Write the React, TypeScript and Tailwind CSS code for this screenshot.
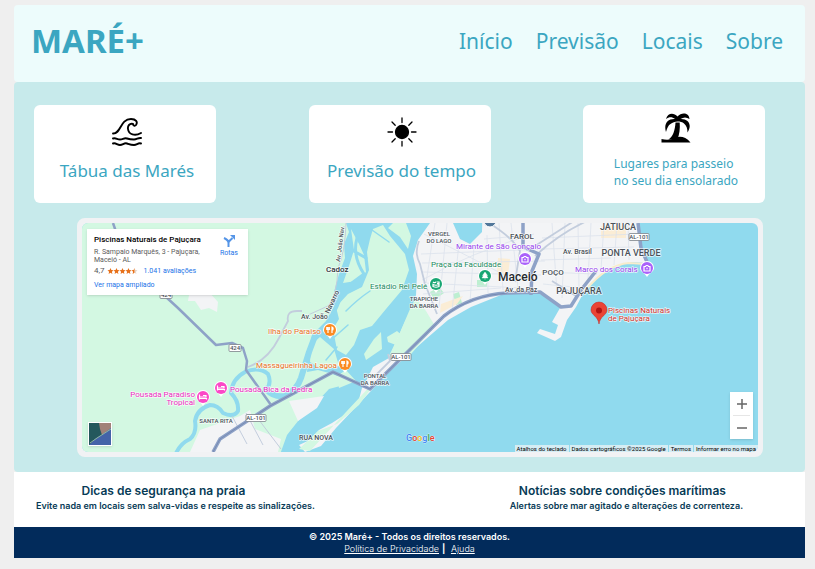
import React from 'react';

const navItems = ['Início', 'Previsão', 'Locais', 'Sobre'];

function WaveIcon() {
  return (
    <svg viewBox="0 0 30 30" className="h-[30px] w-[30px]" fill="none" stroke="#000" strokeWidth="1.9" strokeLinecap="round" strokeLinejoin="round" aria-hidden="true">
      <path d="M1 16.500C9 17 8 2 19 2c5 0 7 3 5 6-1.200 1.400-3 .6-3-1-3.500-1-5.500 2-5 5 .6 5.500 7 7.500 13 4" />
      <path d="M1 21.500c3-1 4 1 7 1s4-2 7-1 4 1 7 1 4-2 7-1.500" />
      <path d="M1 26.500c3-1 4 1.500 7 1.500s4-2.500 7-1.500 4 1.500 7 1.500 4-2.500 7-1.500" />
    </svg>
  );
}

function SunIcon() {
  return (
    <svg viewBox="0 0 30 30" className="h-[30px] w-[30px]" stroke="#000" strokeWidth="1.300" strokeLinecap="round" aria-hidden="true">
      <circle cx="15" cy="15" r="6.500" />
      <path d="M15 1v4.500M15 24.500V29M1 15h4.500M24.500 15H29M5 5l3.200 3.200M21.800 21.800 25 25M5 25l3.200-3.200M21.800 8.200 25 5" />
    </svg>
  );
}

function PalmIcon() {
  return (
    <svg viewBox="0 0 30 30" className="h-[30px] w-[30px]" aria-hidden="true">
      <path d="M16.500 3.500C12.500-1 6.500 0 5 6c3-2.500 6-2.500 9 0C6.500 5.500 2.500 11 5 19c1-4 2.500-7 4.500-8 2-1.500 4.500-2.500 7-2.500s5 .5 6.500 2c2.500 2 3.500 5 3.500 9C31.500 12 27.500 5.500 19.500 6c3-2 6-2 9 0C28-.5 20.500-1 16.500 3.500z" />
      <path d="M14.500 9.500h4.200c.5 6-.3 12-2.200 17H7.500c4.500-3 6.500-9 7-17z" />
      <path d="M.5 26c4 1 7 1 11 0 5-3 12-4 18 3.500H.5z" />
    </svg>
  );
}

function FeatureCard({ icon, children, small }: { icon: React.ReactNode; children: React.ReactNode; small?: boolean }) {
  return (
    <button type="button" className="flex h-[98px] w-[182px] flex-col items-center rounded-md bg-white pl-1 text-[#3ba6c1]">
      <span className={small ? 'mt-2' : 'mt-3'}>{icon}</span>
      <span className={small ? 'mt-3 text-left text-xs leading-[17px]' : 'mt-3 text-[17px] leading-6'}>{children}</span>
    </button>
  );
}

type LabelProps = { x: number; y: number; color?: string; size?: number; weight?: number; anchor?: 'start' | 'middle' | 'end'; rotate?: number; children: string };

function Label({ x, y, color, size = 8, weight, anchor = 'start', rotate = 0, children }: LabelProps) {
  return (
    <text x={x} y={y} fill={color ?? '#4b5259'} fontSize={size} fontWeight={weight ?? (color ? 400 : 500)} textAnchor={anchor} stroke="#fff" strokeWidth="1.5" strokeOpacity="0.75" strokeLinejoin="round" paintOrder="stroke" transform={rotate ? `rotate(${rotate} ${x} ${y})` : undefined}>
      {children}
    </text>
  );
}

function Pin({ x, y, color, kind }: { x: number; y: number; color: string; kind: 'food' | 'bed' | 'tree' | 'camera' | 'stadium' }) {
  return (
    <g transform={`translate(${x} ${y})`}>
      <path d="M-7 0a7 7 0 1 1 14 0c0 4-5 5-7 9-2-4-7-5-7-9z" fill="#fff" />
      <circle r="6" fill={color} />
      <g fill="none" stroke="#fff" strokeWidth="1.200">
        {kind === 'food' && <path d="M-2-3v6M-3.200-3v2.500h2.500V-3M2 3v-6c1.500.5 1.500 3 0 3.500" />}
        {kind === 'bed' && <path d="M-3.500-2.500v5M-3.500 1.500h7v1M-3 0h6V-1.500H0" />}
        {kind === 'tree' && <path d="M0-4-2.500-.5h1L-3 2h6L1.500-.5h1zM0 2v2" fill="#fff" strokeWidth="0.400" />}
        {kind === 'camera' && <path d="M-3-1.500h1.500l.7-1h1.600l.7 1H3V3h-6zM0-.3v1.600" />}
        {kind === 'stadium' && <path d="M-3-2c1 1 3 1 3-.5M1-2h2v1.500H1M-3 .5c2 1 4 1 6 0v2c-2 1-4 1-6 0z" />}
      </g>
    </g>
  );
}

function Shield({ x, y, w, children }: { x: number; y: number; w: number; children: string }) {
  return (
    <g>
      <rect x={x - w / 2} y={y - 3.5} width={w} height="7" rx="1" fill="#fff" stroke="#7b8289" strokeWidth="0.8" />
      <text x={x} y={y + 2.2} fontSize="6" fontWeight="500" textAnchor="middle" fill="#4b5259">{children}</text>
    </g>
  );
}

function MapDrawing() {
  return (
    <svg viewBox="82 223 676 229" preserveAspectRatio="xMidYMid slice" className="block h-[229px] w-full" fontFamily="Roboto, sans-serif" role="img" aria-label="Mapa de Maceió e Piscinas Naturais de Pajuçara">
      <rect x="0" y="150" width="900" height="400" fill="#90daee" />
      {/* land west of the lagoon */}
      <path d="M0 150H346V223L349 232 344 244 345 258 339 274 334 292 334 306 326 321 312 335 309 350 307 372 318 370 329 373 341 377 344 385 329 389 315 404 302 416 287 435 278 460H0z" fill="#d3f8e2" />
      <path d="M190 452 200 430 240 416 250 410 255 429 281 439 278 452zM289 401 324 396 317 408 298 421z" fill="#f3f4f6" />
      {/* lagoon islands */}
      <path d="M351 229 359 244 364 255 366 272 356 281 343 283 349 266 354 250zM373 229 383 225 390 236 405 254 409 270 402 290 386 309 372 326 360 330 354 345 346 355 337 350 333 329 339 319 336 307 348 294 362 287 369 270 367 252 370 239zM393 223h13l5 13-3 13-8-12-12-9zM311 345l9-8 14 12 5 17-16 4-13-8zM337 376l9-6 10 11-17 7zM364 354l10-15 7-7 1 17-16 11zM387 337l10-6 7 6-8 8-8-3z" fill="#d3f8e2" />
      {/* winding river and its branches */}
      <g fill="none" stroke="#90daee" strokeLinecap="round" strokeLinejoin="round">
        <path d="M357 238q-5 18 7 36-12 8-22 18-4 16-12 27M366 258l-14-8" strokeWidth="3" />
        <path d="M370 291q-12 8-24 20M389 242l-17-12M348 325l-17 15M337 347l-11 13" strokeWidth="1.500" />
        <path d="M175 456q4-12 15-17 7-6 5-18 2-12 15-16 8 0 13 8 11 5 15-2 1-10-7-18 1-14 14-21 14-6 23 2 4 9-2 17" strokeWidth="4" />
        <path d="M266 389q8 9 19 7 12-6 16-18l8-26 6-16" strokeWidth="6" />
      </g>
      {/* coast, city and harbour */}
      <path d="M432 150 430 223 418 240 413 256 417 274 416 295 412 308 404 324 397 340 389 358 373 367 366 381 362 388 358 403 349 412 332 423 319 430 310 440 299 445 305 452 321 446 336 428 369 393 390 371 426 339 448 320 471 307 506 293 532 290 550 299 560 308 552 322 558 325 555 334 540 329 537 333 555 341 561 337 567 320 576 307 586 288 606 270 630 262 648 263 639 246 637 150z" fill="#f3f4f6" />
      <path d="M416 298 410 309 398 337 389 356 406 360 435 326 426 311zM370 390l-11 15-22 19-19 7-19 18 11 2 36-39 29-31z" fill="#d3f8e2" />
      <path d="M453 150V223L460 239 470 244 482 232 484 150z" fill="#90daee" />
      <path d="m430 292 9-5 5 6-10 7zM453 294l6-2 3 11-6 2zM477 280h10v7h-10z" fill="#bdefd1" />
      <path d="m498 258 12 1-2 16-11-3zM441 304l22-8-6 8-17 9zM601 226h25v12h-25z" fill="#fbedd5" />
      {/* local streets */}
      <g fill="none" stroke="#dce2ec" strokeWidth="0.8">
        <path d="M484 239l48-4M421 254l124-5M422 263l123-2M422 272l119 3M423 283l99 5M423 294l78-6M435 223l-10 67M447 223l-8 84M459 243l-7 68M474 246l-4 56M487 235l1 58M499 223l4 67M511 223l7 65M424 234q40 20 94 48M422 280q50-28 112-46M542 238l94-4M541 249l93-2M541 260l70-2M541 272l56 2M543 284l40 4M552 223l5 69M565 223l-3 75M578 223l1 66M591 223l-3 56M604 223l-3 47M617 223l-3 42M628 223l1 37" />
      </g>
      <g fill="none" stroke="#c3cddd" strokeWidth="1.800">
        <path d="M419 241q-5 12 1 23l5 20 12 30M489 223q24 15 31 28l-5 31M535 256q25-23 54-36M535 246l39-25M552 281l24 15M375 376l15-15-2-7M248 367q20-7 31-29l9-17q-2-10 9-10h5" />
        <path d="M346 223q-1 30-8 45-1 28-10 38l-20 9M232 416l15 28M246 413l17 32M259 420l22 29" strokeWidth="1" />
      </g>
      <path d="M586 290q20-25 43-27l17 1" fill="none" stroke="#f8eccb" strokeWidth="2" />
      {/* highways */}
      <g fill="none" stroke="#8ea2c7" strokeLinejoin="round">
        <path d="m113 223 9 26 44 48 12 11 38 37 16-2 11 5 4 13-1 9 25 35" strokeWidth="2.500" />
        <path d="m213 452 7-13 50-33 63-34 37 17 74-73q27-21 63-23l33-1 21 15 10-1 10-16 15-19M638 223l3 25 6 14M523 223v24l16 7-7 17-1 24" strokeWidth="3.500" />
      </g>
      <path d="m213 452 7-13 50-33 63-34 37 17 74-73q27-21 63-23" fill="none" stroke="#7185ae" strokeWidth="0.800" />
      <path d="m189 295 20-3 9 10-1 10-8-4-8 2-6-9-7 0z" fill="#f3f4f6" />
      <path d="M484 221a6 6 0 0 0 12 0" fill="#52779a" stroke="#fff" />

      <Shield x={235} y={348} w={12}>424</Shield>
      <Shield x={166} y={295} w={12}>424</Shield>
      <Shield x={256} y={418} w={20}>AL-101</Shield>
      <Shield x={401} y={357} w={20}>AL-101</Shield>
      <Shield x={639} y={237} w={20}>AL-101</Shield>

      <Label x={326} y={272} color="#30363b" weight={500}>Cadoz</Label>
      <Label x={340} y={262} size={6} rotate={-83}>Av. João Nav.</Label>
      <Label x={301} y={319} size={7}>Av. João</Label>
      <Label x={329} y={314} size={7} rotate={-65}>Navarro</Label>
      <Label x={439} y={236} size={6} anchor="middle">VERGEL</Label>
      <Label x={439} y={243} size={6} anchor="middle">DO LAGO</Label>
      <Label x={424} y={301} size={6} anchor="middle">TRAPICHE</Label>
      <Label x={424} y={308} size={6} anchor="middle">DA BARRA</Label>
      <Label x={375} y={378} size={6} anchor="middle">PONTAL</Label>
      <Label x={375} y={385} size={6} anchor="middle">DA BARRA</Label>
      <Label x={216} y={423} size={6} anchor="middle">SANTA RITA</Label>
      <Label x={316} y={440} size={7} anchor="middle">RUA NOVA</Label>
      <Label x={522} y={239} anchor="middle">FAROL</Label>
      <Label x={618} y={230} size={9} anchor="middle">JATIUCA</Label>
      <Label x={631} y={256} size={9} anchor="middle">PONTA VERDE</Label>
      <Label x={553} y={275} anchor="middle">POÇO</Label>
      <Label x={579} y={294} size={9} anchor="middle">PAJUÇARA</Label>
      <Label x={563} y={254} size={7}>Av. Brasil</Label>
      <Label x={505} y={292} size={7}>Av. da Paz</Label>
      <Label x={498} y={281} size={12} color="#252a2e" weight={500}>Maceió</Label>
      <Label x={431} y={267} color="#1b8b61">Praça da Faculdade</Label>
      <Label x={370} y={289} color="#1b8b61">Estádio Rei Pelé</Label>
      <Label x={456} y={249} color="#9742ed">Mirante de São Gonçalo</Label>
      <Label x={575} y={272} color="#9742ed">Marco dos Corais</Label>
      <Label x={268} y={334} color="#e9711f">Ilha do Paraiso</Label>
      <Label x={256} y={368} color="#e9711f">Massagueirinha Lagoa</Label>
      <Label x={230} y={392} color="#eb2cbe">Pousada Bica da Pedra</Label>
      <Label x={195} y={397} color="#eb2cbe" anchor="end">Pousada Paradiso</Label>
      <Label x={195} y={405} color="#eb2cbe" anchor="end">Tropical</Label>
      <Label x={608} y={313} color="#d4342d">Piscinas Naturais</Label>
      <Label x={608} y={321} color="#d4342d">de Pajuçara</Label>

      <Pin x={330} y={330} color="#fb8b22" kind="food" />
      <Pin x={345} y={364} color="#fb8b22" kind="food" />
      <Pin x={221} y={388} color="#fb48c7" kind="bed" />
      <Pin x={203} y={397} color="#fb48c7" kind="bed" />
      <Pin x={436} y={284} color="#18a673" kind="stadium" />
      <Pin x={485} y={276} color="#18a673" kind="tree" />
      <Pin x={525} y={259} color="#aa61fa" kind="camera" />
      <Pin x={647} y={268} color="#aa61fa" kind="camera" />
      <path d="M599 324c-1-8-8-9-8-14a8 8 0 1 1 16 0c0 5-7 6-8 14z" fill="#ea4335" stroke="#c5221f" strokeWidth="0.5" />
      <circle cx="599" cy="310.500" r="3" fill="#b31412" />
      <text x="406" y="441" fontSize="9" fontWeight="500" stroke="#fff" strokeWidth="0.500" paintOrder="stroke">
        <tspan fill="#4285f4">G</tspan><tspan fill="#ea4335">o</tspan><tspan fill="#fbbc05">o</tspan><tspan fill="#4285f4">g</tspan><tspan fill="#34a853">l</tspan><tspan fill="#ea4335">e</tspan>
      </text>
    </svg>
  );
}

function PlaceCard() {
  return (
    <article className="absolute left-[5px] top-1.5 flex h-[66px] w-[161px] justify-between bg-white py-1.5 pl-[7px] pr-2.5 shadow-sm">
      <div>
        <h2 className="whitespace-nowrap text-[8px] font-medium leading-[9px] text-black">Piscinas Naturais de Pajuçara</h2>
        <p className="mt-1 whitespace-nowrap text-[7px] leading-2 text-[#5b5b5b]">R. Sampaio Marquês, 3 - Pajuçara,<br />Maceió - AL</p>
        <p className="mt-px flex items-center whitespace-nowrap text-[8px] leading-3 text-[#5b5b5b]">
          4,7
          <svg viewBox="0 0 50 10" className="ml-0.5 h-[6px] w-[31px]" aria-hidden="true">
            {[0, 10, 20, 30].map((x) => (
              <path key={x} transform={`translate(${x} 0)`} d="m5 0 1.500 3.500 3.500.3-2.700 2.500.9 3.700L5 8 1.800 10l.9-3.700L0 3.800l3.500-.3z" fill="#e7711b" />
            ))}
            <path transform="translate(40 0)" d="m5 0 1.500 3.500 3.500.3-2.700 2.500.9 3.700L5 8z" fill="#e6d5c8" />
            <path transform="translate(40 0)" d="M5 0v8l-3.200 2 .9-3.700L0 3.800l3.500-.3z" fill="#e7711b" />
          </svg>
          <a href="#avaliacoes" className="ml-1.5 text-[7px] text-[#1a73e8]">1.041 avaliações</a>
        </p>
        <a href="#mapa" className="mt-1 block text-[7px] leading-2 text-[#1a73e8]">Ver mapa ampliado</a>
      </div>
      <a href="#rotas" className="flex flex-col items-center text-[7px] leading-2 text-[#1a73e8]">
        <svg viewBox="0 0 12 12" className="mb-0.5 h-3 w-3" fill="none" stroke="#5595e7" strokeWidth="2" aria-hidden="true">
          <path d="M5.500 12V8q0-2 2-3l2-2M5.500 8Q5.500 5 1 3" />
          <path d="M7 0h5v5z" fill="#5595e7" stroke="none" />
        </svg>
        Rotas
      </a>
    </article>
  );
}

function MapPanel() {
  return (
    <section className="ml-[63px] mr-[42px] mt-[15px] rounded-lg border-[5px] border-[#f1f2f4] bg-[#f1f2f4] font-['Roboto',sans-serif]">
      <div className="relative overflow-hidden rounded-md">
        <MapDrawing />
        <PlaceCard />
        <button type="button" aria-label="Vista de satélite" className="absolute bottom-1.5 left-1.5 h-6 w-6 border border-white shadow">
          <svg viewBox="0 0 22 22" className="block h-full w-full">
            <path d="M0 0h22v22H0z" fill="#24585d" />
            <path d="M10 0h12v6l-9 6-2-6z" fill="#a18178" />
            <path d="m0 22 6-6 8-5 8-6v17z" fill="#4463a8" />
            <path d="m1 20 7-5L22 6" stroke="#8eb5a2" fill="none" />
          </svg>
        </button>
        <div className="absolute bottom-[13px] right-[5px] flex w-[23px] flex-col items-center bg-white text-[#666] shadow-sm">
          <button type="button" aria-label="Aumentar zoom" className="flex h-[23px] w-full items-center justify-center">
            <svg viewBox="0 0 10 10" className="h-2.5 w-2.5" stroke="currentColor" strokeWidth="1.500"><path d="M0 5h10M5 0v10" /></svg>
          </button>
          <span className="h-px w-[17px] bg-[#e6e6e6]" />
          <button type="button" aria-label="Diminuir zoom" className="flex h-[23px] w-full items-center justify-center">
            <svg viewBox="0 0 10 10" className="h-2.5 w-2.5" stroke="currentColor" strokeWidth="1.500"><path d="M0 5h10" /></svg>
          </button>
        </div>
        <div className="absolute bottom-0 right-0 flex gap-px whitespace-nowrap text-[6px] leading-[7px] text-black">
          <button type="button" className="bg-[#d5edf4] px-0.5">Atalhos do teclado</button>
          <span className="bg-[#d5edf4] px-0.5">Dados cartográficos ©2025 Google</span>
          <a href="#termos" className="bg-[#d5edf4] px-0.5">Termos</a>
          <a href="#erro" className="bg-[#d5edf4] px-0.5">Informar erro no mapa</a>
        </div>
      </div>
    </section>
  );
}

export default function App() {
  return (
    <div className="min-h-screen bg-[#efefef] pb-[11px] pl-3.5 pr-2.5 pt-[5px] font-['Noto_Sans',sans-serif]">
      <header className="flex h-[77px] items-center justify-between rounded bg-[#edfcfc] pb-1.5 pl-[17px] pr-[22px] text-[#3ba6c1]">
        <h1 className="text-[33px] font-bold leading-10">MARÉ+</h1>
        <nav className="flex gap-[23px] text-[21px] leading-7">
          {navItems.map((item) => <a key={item} href={`#${item.toLowerCase()}`}>{item}</a>)}
        </nav>
      </header>
      <main className="rounded bg-[#c7eaeb] pb-[15px] pt-[23px]">
        <section className="flex justify-between pl-5 pr-10">
          <FeatureCard icon={<WaveIcon />}>Tábua das Marés</FeatureCard>
          <FeatureCard icon={<SunIcon />}>Previsão do tempo</FeatureCard>
          <FeatureCard icon={<PalmIcon />} small>Lugares para passeio<br />no seu dia ensolarado</FeatureCard>
        </section>
        <MapPanel />
      </main>
      <section className="flex h-[55px] justify-between bg-white pl-[22px] pr-[62px] pt-3 text-center font-['Inter',sans-serif] text-[#073b56]">
        <div>
          <h2 className="pr-6 text-xs font-semibold leading-[14px]">Dicas de segurança na praia</h2>
          <p className="text-[9px] font-semibold leading-4">Evite nada em locais sem salva-vidas e respeite as sinalizações.</p>
        </div>
        <div>
          <h2 className="pr-2 text-xs font-semibold leading-[14px]">Notícias sobre condições marítimas</h2>
          <p className="text-[9px] font-semibold leading-4">Alertas sobre mar agitado e alterações de correnteza.</p>
        </div>
      </section>
      <footer className="bg-[#022b5b] pb-[3px] pt-1 text-center font-['Inter',sans-serif] text-[9px] leading-3 text-white">
        <p className="font-semibold">© 2025 Maré+ - Todos os direitos reservados.</p>
        <p className="font-light"><a href="#privacidade" className="underline">Política de Privacidade</a><span className="mx-[3px] font-bold">|</span> <a href="#ajuda" className="underline">Ajuda</a></p>
      </footer>
    </div>
  );
}
